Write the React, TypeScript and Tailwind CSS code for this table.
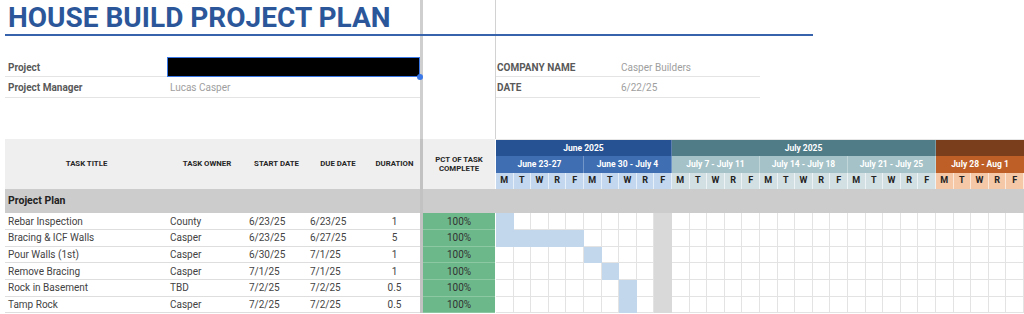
import React from "react";

const days = ["M", "T", "W", "R", "F"];

const tasks = [
  { title: "Rebar Inspection", owner: "County", start: "6/23/25", due: "6/23/25", dur: "1", from: 0, to: 0 },
  { title: "Bracing & ICF Walls", owner: "Casper", start: "6/23/25", due: "6/27/25", dur: "5", from: 0, to: 4 },
  { title: "Pour Walls (1st)", owner: "Casper", start: "6/30/25", due: "7/1/25", dur: "1", from: 5, to: 5 },
  { title: "Remove Bracing", owner: "Casper", start: "7/1/25", due: "7/1/25", dur: "1", from: 6, to: 6 },
  { title: "Rock in Basement", owner: "TBD", start: "7/2/25", due: "7/2/25", dur: "0.5", from: 7, to: 7 },
  { title: "Tamp Rock", owner: "Casper", start: "7/2/25", due: "7/2/25", dur: "0.5", from: 7, to: 7 },
];

// 30 day columns: 10 june, 15 july, 5 aug
function dayBg(i: number) {
  if (i < 10) return "bg-[#c3d7ee]";
  if (i < 25) return "bg-[#d2e0e4]";
  return "bg-[#f5c8a8]";
}

function Divider({ light = false }: { light?: boolean }) {
  return <div className={light ? "w-[3px] shrink-0 bg-[#cfcfcf]" : "w-[3px] shrink-0 bg-[#c2c2c2]"} />;
}

function TopLine() {
  return <div className="w-[1px] shrink-0 bg-[#d2d2d2]" />;
}

export default function App() {
  return (
    <div className="w-[1024px] h-[314px] overflow-hidden bg-white font-['Roboto','Liberation_Sans',sans-serif]">
      {/* title */}
      <div className="flex h-[34px]">
        <div className="w-[5px] shrink-0" />
        <div className="w-[415px] shrink-0 pl-[3px] text-[28px] leading-[36px] font-bold text-[#2b579a] whitespace-nowrap overflow-visible">
          HOUSE BUILD PROJECT PLAN
        </div>
        <Divider light />
        <div className="w-[72px] shrink-0" />
        <TopLine />
        <div className="flex-1" />
      </div>
      <div className="flex h-[2px]">
        <div className="w-[5px] shrink-0" />
        <div className="w-[808px] shrink-0 bg-[#3763ad]" />
      </div>
      <div className="flex h-[21px]">
        <div className="w-[420px] shrink-0" />
        <Divider light />
        <div className="w-[72px] shrink-0" />
        <TopLine />
        <div className="flex-1" />
      </div>

      {/* project rows */}
      <div className="flex h-[20.33px] text-[10px]">
        <div className="w-[5px] shrink-0" />
        <div className="w-[163px] shrink-0 pl-[3px] pt-[1px] flex items-center font-bold text-[#595959] border-b border-[#e4e4e4]">
          Project
        </div>
        <div className="w-[252px] shrink-0 relative">
          <div className="h-full -ml-[1px] bg-black border-[1.5px] border-[#3b78e7]" />
          <span className="absolute -right-[3px] -bottom-[3px] w-[6px] h-[6px] rounded-full bg-[#3b78e7]" />
        </div>
        <Divider light />
        <div className="w-[72px] shrink-0" />
        <TopLine />
        <div className="w-[122px] shrink-0 pl-[1px] pt-[1px] flex items-center font-bold text-[#595959] border-b border-[#e4e4e4]">
          COMPANY NAME
        </div>
        <div className="w-[142px] shrink-0 pl-[3px] pt-[1px] flex items-center text-[#9e9e9e] border-b border-[#e4e4e4]">
          Casper Builders
        </div>
      </div>
      <div className="flex h-[20.33px] text-[10px]">
        <div className="w-[5px] shrink-0" />
        <div className="w-[163px] shrink-0 pl-[3px] pt-[1px] flex items-center font-bold text-[#595959] border-b border-[#e4e4e4]">
          Project Manager
        </div>
        <div className="w-[252px] shrink-0 pl-[2px] pt-[1px] flex items-center text-[#9e9e9e] border-b border-[#e4e4e4]">
          Lucas Casper
        </div>
        <Divider light />
        <div className="w-[72px] shrink-0" />
        <TopLine />
        <div className="w-[122px] shrink-0 pl-[1px] pt-[1px] flex items-center font-bold text-[#595959] border-b border-[#e4e4e4]">
          DATE
        </div>
        <div className="w-[142px] shrink-0 pl-[3px] pt-[1px] flex items-center text-[#9e9e9e] border-b border-[#e4e4e4]">
          6/22/25
        </div>
      </div>
      <div className="flex h-[41.34px]">
        <div className="w-[420px] shrink-0" />
        <Divider light />
        <div className="w-[72px] shrink-0" />
        <TopLine />
        <div className="flex-1" />
      </div>

      {/* table header */}
      <div className="flex h-[50.33px] text-[7.8px] font-bold text-[#262626]">
        <div className="w-[5px] shrink-0" />
        <div className="w-[415px] shrink-0 flex items-center bg-[#efefef]">
          <div className="w-[163px] text-center">TASK TITLE</div>
          <div className="w-[78px] text-center">TASK OWNER</div>
          <div className="w-[61px] text-center">START DATE</div>
          <div className="w-[62px] text-center">DUE DATE</div>
          <div className="w-[51px] text-center">DURATION</div>
        </div>
        <Divider />
        <div className="w-[72px] shrink-0 flex items-center justify-center text-center leading-[9.5px] bg-[#efefef]">
          PCT OF TASK
          <br />
          COMPLETE
        </div>
        <div className="w-[1px] shrink-0 bg-white" />
        <div className="w-[528px] shrink-0 flex flex-col text-[8.5px]">
          <div className="h-[17px] grid grid-cols-[repeat(30,minmax(0,1fr))] text-white border-t border-[#e6e6e6]">
            <div className="col-span-10 flex items-center justify-center bg-[#265294] border-r border-[#5d7fb0]">June 2025</div>
            <div className="col-span-15 flex items-center justify-center bg-[#507c88] border-r border-[#7a9aa3]">July 2025</div>
            <div className="col-span-5 bg-[#7a3e1c]" />
          </div>
          <div className="h-[16.67px] grid grid-cols-[repeat(30,minmax(0,1fr))] text-white">
            <div className="col-span-5 flex items-center justify-center bg-[#3f6eb2] border-r border-[#7396c8]">June 23-27</div>
            <div className="col-span-5 flex items-center justify-center bg-[#3f6eb2] border-r border-[#7396c8]">June 30 - July 4</div>
            <div className="col-span-5 flex items-center justify-center bg-[#a4c2c7] border-r border-[#c1d6d9]">July 7 - July 11</div>
            <div className="col-span-5 flex items-center justify-center bg-[#a4c2c7] border-r border-[#c1d6d9]">July 14 - July 18</div>
            <div className="col-span-5 flex items-center justify-center bg-[#a4c2c7] border-r border-[#c1d6d9]">July 21 - July 25</div>
            <div className="col-span-5 flex items-center justify-center bg-[#be5f28]">July 28 - Aug 1</div>
          </div>
          <div className="h-[16.66px] grid grid-cols-[repeat(30,minmax(0,1fr))] text-[9px] text-[#222]">
            {Array.from({ length: 30 }).map((_, i) => (
              <div key={i} className={`flex items-center justify-center border-r border-white/60 ${dayBg(i)}`}>
                {days[i % 5]}
              </div>
            ))}
          </div>
        </div>
      </div>

      {/* section row */}
      <div className="flex h-[24px]">
        <div className="w-[5px] shrink-0" />
        <div className="w-[415px] shrink-0 pl-[3px] flex items-center bg-[#cccccc] text-[10.5px] font-bold text-[#222]">
          Project Plan
        </div>
        <Divider />
        <div className="w-[72px] shrink-0 bg-[#cccccc]" />
        <div className="w-[1px] shrink-0 bg-[#cccccc]" />
        <div className="w-[528px] shrink-0 bg-[#cccccc]" />
      </div>

      {/* task rows */}
      {tasks.map((t) => (
        <div key={t.title} className="flex h-[16.67px] text-[10px] text-[#434343]">
          <div className="w-[5px] shrink-0" />
          <div className="w-[163px] shrink-0 pl-[3px] flex items-center border-b border-[#dedede]">{t.title}</div>
          <div className="w-[78px] shrink-0 pl-[2px] flex items-center border-b border-[#dedede]">{t.owner}</div>
          <div className="w-[61px] shrink-0 pl-[3px] flex items-center border-b border-[#dedede]">{t.start}</div>
          <div className="w-[62px] shrink-0 pl-[3px] flex items-center border-b border-[#dedede]">{t.due}</div>
          <div className="w-[51px] shrink-0 flex items-center justify-center border-b border-[#dedede]">{t.dur}</div>
          <Divider />
          <div className="w-[72px] shrink-0 flex items-center justify-center bg-[#6cb88a] border-b border-[#8cc9a3] text-[#333]">
            100%
          </div>
          <div className="w-[1px] shrink-0 bg-white" />
          <div className="w-[528px] shrink-0 grid grid-cols-[repeat(30,minmax(0,1fr))]">
            {Array.from({ length: 30 }).map((_, i) => {
              const filled = i >= t.from && i <= t.to;
              const holiday = i === 9;
              return (
                <div
                  key={i}
                  className={
                    filled
                      ? "bg-[#c2d6ec] border-b border-[#c2d6ec]"
                      : holiday
                        ? "bg-[#d9d9d9] border-b border-[#d9d9d9]"
                        : "border-r border-b border-[#e3e3e3]"
                  }
                />
              );
            })}
          </div>
        </div>
      ))}
    </div>
  );
}
